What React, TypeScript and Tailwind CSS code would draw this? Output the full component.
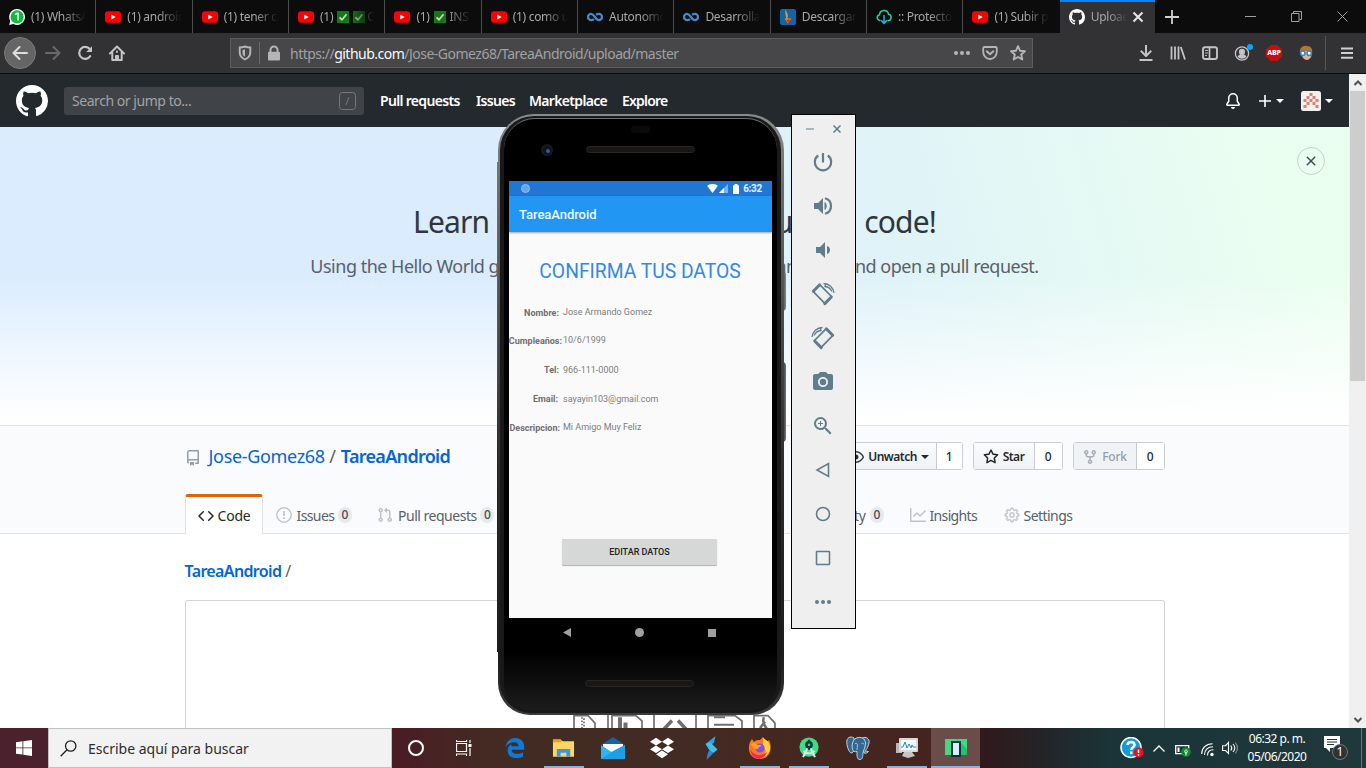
import React from "react";
import { GoGear, GoEye, GoPlay, GoProject, GoBook, GoShield } from "react-icons/go";
import { MdCameraAlt, MdZoomIn } from "react-icons/md";
import { SiDropbox } from "react-icons/si";

const UI = "font-['Noto_Sans','Open_Sans',sans-serif]";

function Octicon({ d, className = "" }: { d: string; className?: string }) {
  return <svg viewBox="0 0 16 16" className={`h-4 w-4 shrink-0 ${className}`} fill="currentColor" fillRule="evenodd"><path d={d} /></svg>;
}

const repoPath = "M2 2.5A2.5 2.5 0 014.5 0h8.75a.75.75 0 01.75.75v12.5a.75.75 0 01-.75.75h-2.5a.75.75 0 110-1.500h1.750v-2h-8a1 1 0 00-.714 1.700.75.75 0 01-1.072 1.050A2.495 2.495 0 012 11.500v-9zm10.500-1V9h-8c-.356 0-.694.074-1 .208V2.500a1 1 0 011-1h8zM5 12.250v3.250a.25.25 0 00.4.2l1.450-1.087a.25.25 0 01.3 0L8.600 15.700a.25.25 0 00.4-.2v-3.250a.25.25 0 00-.25-.25h-3.500a.25.25 0 00-.25.25z";
const codePath = "M4.72 3.22a.75.75 0 011.060 1.060L2.060 8l3.720 3.720a.75.75 0 11-1.060 1.060L.47 8.530a.75.75 0 010-1.060l4.250-4.250zm6.560 0a.75.75 0 10-1.060 1.060L13.940 8l-3.720 3.720a.75.75 0 101.060 1.060l4.250-4.250a.75.75 0 000-1.060l-4.250-4.250z";
const pullPath = "M7.177 3.073L9.573.677A.25.25 0 0110 .854v4.792a.25.25 0 01-.427.177L7.177 3.427a.25.25 0 010-.354zM3.750 2.500a.75.75 0 100 1.500.75.75 0 000-1.500zm-2.250.75a2.250 2.250 0 113 2.122v5.256a2.251 2.251 0 11-1.500 0V5.372A2.250 2.250 0 011.500 3.250zM11 2.500h-1V4h1a1 1 0 011 1v5.628a2.251 2.251 0 101.500 0V5A2.500 2.500 0 0011 2.500zm1 10.250a.75.75 0 111.500 0 .75.75 0 01-1.500 0zM3.750 12a.75.75 0 100 1.500.75.75 0 000-1.500z";
const forkPath = "M5 3.250a.75.75 0 11-1.500 0 .75.75 0 011.500 0zm0 2.122a2.250 2.250 0 10-1.500 0v.878A2.250 2.250 0 005.750 8.500h1.500v2.128a2.251 2.251 0 101.500 0V8.500h1.500a2.250 2.250 0 002.250-2.250v-.878a2.250 2.250 0 10-1.500 0v.878a.75.75 0 01-.75.75h-4.500A.75.75 0 015 6.250v-.878zm3.750 7.378a.75.75 0 11-1.500 0 .75.75 0 011.500 0zm3-8.750a.75.75 0 100-1.500.75.75 0 000 1.500z";
const starPath = "M8 .25a.75.75 0 01.673.418l1.882 3.815 4.210.612a.75.75 0 01.416 1.279l-3.046 2.970.719 4.192a.75.75 0 01-1.088.791L8 12.347l-3.766 1.980a.75.75 0 01-1.088-.79l.72-4.194L.818 6.374a.75.75 0 01.416-1.280l4.210-.611L7.327.668A.75.75 0 018 .25zm0 2.445L6.615 5.500a.75.75 0 01-.564.41l-3.097.45 2.240 2.184a.75.75 0 01.216.664l-.528 3.084 2.769-1.456a.75.75 0 01.698 0l2.770 1.456-.53-3.084a.75.75 0 01.216-.664l2.240-2.183-3.096-.45a.75.75 0 01-.564-.41L8 2.694z";
const graphPath = "M1.500 1.750a.75.75 0 00-1.500 0v12.500c0 .414.336.75.75.75h14.500a.75.75 0 000-1.500H1.500V1.750zm14.280 2.530a.75.75 0 00-1.060-1.060L10 7.940 7.530 5.470a.75.75 0 00-1.060 0L3.220 8.720a.75.75 0 001.060 1.060L7 7.060l2.470 2.470a.75.75 0 001.060 0l5.250-5.250z";
const bellPath = "M8 16a2 2 0 001.985-1.750c.017-.137-.097-.25-.235-.25h-3.500c-.138 0-.252.113-.235.25A2 2 0 008 16zM8 1.500A3.500 3.500 0 004.500 5v2.947c0 .346-.102.683-.294.97L2.500 11.500h11l-1.706-2.583a1.750 1.750 0 01-.294-.97V5A3.500 3.500 0 008 1.500zM3 5a5 5 0 0110 0v2.947c0 .05.015.098.042.139l1.703 2.555A1.518 1.518 0 0113.482 13H2.518a1.518 1.518 0 01-1.263-2.360l1.703-2.554A.25.25 0 003 7.947V5z";

function Octocat({ className }: { className?: string }) {
  return (
    <svg viewBox="0 0 16 16" className={className} fill="currentColor">
      <path d="M8 0C3.58 0 0 3.58 0 8c0 3.54 2.29 6.53 5.47 7.59.4.07.55-.17.55-.38 0-.19-.01-.82-.01-1.49-2.01.37-2.53-.49-2.69-.94-.09-.23-.48-.98-.82-1.17-.28-.15-.68-.52-.01-.53.63-.01 1.08.58 1.23.82.72 1.21 1.87.87 2.33.66.07-.52.28-.87.51-1.07-1.78-.2-3.64-.89-3.64-3.95 0-.87.31-1.59.82-2.15-.08-.2-.36-1.02.08-2.12 0 0 .67-.21 2.2.82.64-.18 1.32-.27 2-.27s1.36.09 2 .27c1.53-1.04 2.2-.82 2.2-.82.44 1.1.16 1.92.08 2.12.51.56.82 1.27.82 2.15 0 3.07-1.87 3.75-3.65 3.95.29.25.54.73.54 1.48 0 1.07-.01 1.93-.01 2.2 0 .21.15.46.55.38A8.01 8.01 0 0 0 16 8c0-4.42-3.58-8-8-8z" />
    </svg>
  );
}

function YouTube() {
  return (
    <svg viewBox="0 0 16 16" className="h-4 w-4 shrink-0">
      <rect x="0" y="2.3" width="16" height="11.4" rx="3" fill="#ff0000" />
      <path d="M6.3 5.6 10.6 8l-4.3 2.4z" fill="#fff" />
    </svg>
  );
}

function WhatsApp() {
  return (
    <svg viewBox="0 0 16 16" className="h-4 w-4 shrink-0">
      <path d="M8 0a8 8 0 1 1-3.7 15.1L.2 16l1-4A8 8 0 0 1 8 0z" fill="#fff" />
      <circle cx="8.1" cy="7.9" r="6.6" fill="#12b83f" />
      <path d="M6 5.7 8 4.2h1v7.2" fill="none" stroke="#fff" strokeWidth="1.6" />
    </svg>
  );
}

function Loop() {
  return (
    <svg viewBox="0 0 16 16" className="h-4 w-4 shrink-0" fill="none" stroke="#4a86c6" strokeWidth="2.3">
      <path d="M7 10.200C6 11 5.200 11.200 4.200 11.200a3.200 3.200 0 0 1 0-6.400C7.500 4.800 8.300 11.200 11.800 11.200a3.200 3.200 0 0 0 0-6.400c-1 0-1.800.2-2.800 1" />
    </svg>
  );
}

function Flame() {
  return (
    <svg viewBox="0 0 16 16" className="h-4 w-4 shrink-0">
      <rect width="16" height="16" rx="2" fill="#0c67a8" />
      <path d="M6 0c-.5 2.500 2 4 2 6.500L7.500 9.500h4L8 14.500 4.500 9.500H6C6.500 7 4 3 6 0z" fill="#f48a20" />
      <path d="M6 10.500h5.500L8.500 14.500z" fill="#d5380f" />
    </svg>
  );
}

function CloudDown() {
  return (
    <svg viewBox="0 0 16 16" className="h-4 w-4 shrink-0" fill="none" strokeWidth="1.500">
      <path d="M4.500 11.500H3.500a3 3 0 0 1 0-5.800C4 .5 11.500 0 12.500 5.200c3.500.5 3.500 6.300 0 6.300h-1" stroke="#2ed19a" />
      <path d="M8 6v8M5 11.200 8 14.300l3-3.100" stroke="#21b4e6" />
    </svg>
  );
}

function Check() {
  return (
    <svg viewBox="0 0 12 12" className="h-3 w-3 shrink-0">
      <rect width="12" height="12" fill="#127a12" />
      <path d="M2.500 6.300 5 8.700l4.500-5.500" fill="none" stroke="#d0d0d0" strokeWidth="1.700" />
    </svg>
  );
}

type TabData = { icon: React.ReactNode; text: React.ReactNode };

const tabs: TabData[] = [
  { icon: <WhatsApp />, text: "(1) WhatsApp" },
  { icon: <YouTube />, text: "(1) android studio" },
  { icon: <YouTube />, text: "(1) tener cuidado" },
  { icon: <YouTube />, text: <><span>(1)</span><Check /><Check /><span className="ml-[-2px]">COMO</span></> },
  { icon: <YouTube />, text: <><span>(1)</span><Check /><span>INSTALAR</span></> },
  { icon: <YouTube />, text: "(1) como usar" },
  { icon: <Loop />, text: "Autonomo - 1" },
  { icon: <Loop />, text: "Desarrollar app" },
  { icon: <Flame />, text: "Descargar todo" },
  { icon: <CloudDown />, text: ":: Protectora ::" },
  { icon: <YouTube />, text: "(1) Subir proyecto" },
];

function TabBar() {
  return (
    <div className="flex h-[33px] shrink-0 bg-[#0c0c0d] text-[12px] tracking-[-0.3px] text-[#a8a8a9]">
      {tabs.map((t, i) => (
        <div key={i} className={`flex w-[96.35px] shrink-0 items-center gap-[6px] pt-px pl-[9px] ${i < 10 ? "border-r border-[#4d4d4e]" : ""}`}>
          {t.icon}
          <div className="flex h-5 w-[56px] items-center gap-[4px] overflow-hidden whitespace-nowrap [mask-image:linear-gradient(to_right,#000_55%,transparent_98%)]">
            {t.text}
          </div>
        </div>
      ))}
      <div className="flex w-[95px] shrink-0 items-center gap-[6px] border-t-2 border-[#0a84ff] bg-[#323234] pb-px pl-[9px]">
        <Octocat className="h-4 w-4 shrink-0 text-white" />
        <div className="w-[37px] overflow-hidden whitespace-nowrap [mask-image:linear-gradient(to_right,#000_45%,transparent_100%)]">Upload files</div>
        <svg viewBox="0 0 12 12" className="ml-[-2px] h-3 w-3" stroke="#e6e6e6" strokeWidth="2"><path d="M1.500 1.500l9 9M10.500 1.500l-9 9" /></svg>
      </div>
      <div className="flex w-[35px] items-center justify-center">
        <svg viewBox="0 0 14 14" className="h-[14px] w-[14px]" stroke="#d0d0d0" strokeWidth="1.800"><path d="M7 0v14M0 7h14" /></svg>
      </div>
      <div className="ml-auto flex items-center gap-[35px] pr-[18px]">
        <svg viewBox="0 0 11 11" className="h-[11px] w-[11px]" stroke="#a0a0a0"><path d="M0 5.500h11" /></svg>
        <svg viewBox="0 0 11 11" className="h-[11px] w-[11px]" fill="none" stroke="#a0a0a0"><path d="M.5 2.500h7.500v8H.5zM2.500 2.500v-2h8v8h-2" /></svg>
        <svg viewBox="0 0 11 11" className="h-[11px] w-[11px]" stroke="#a0a0a0"><path d="M.5.5l10 10M10.500.5l-10 10" /></svg>
      </div>
    </div>
  );
}

function Toolbar() {
  const s = { fill: "none", stroke: "#c4c4c5", strokeWidth: 2, strokeLinecap: "round" as const, strokeLinejoin: "round" as const };
  return (
    <div className="flex h-[41px] shrink-0 items-center border-b border-[#0c0c0d] bg-[#323234]">
      <div className="ml-1 flex h-8 w-8 items-center justify-center rounded-full border border-[#7a7a7b] bg-[#656566]">
        <svg viewBox="0 0 16 16" className="h-4 w-4" {...s} stroke="#dedede"><path d="M15 8H1.500M7.500 2l-6 6 6 6" /></svg>
      </div>
      <svg viewBox="0 0 16 16" className="ml-[9px] h-4 w-4" {...s} stroke="#69696a"><path d="M1 8h13.500M8.500 2l6 6-6 6" /></svg>
      <svg viewBox="0 0 16 16" className="ml-4 h-4 w-4" {...s}><path d="M13.200 11.200A6 6 0 1 1 12.800 4" strokeWidth="2.200" /><path d="M15 1.200V7H9.200z" fill="#c4c4c5" stroke="none" /></svg>
      <svg viewBox="0 0 16 16" className="ml-4 h-4 w-4" {...s}><path d="M1 8.500 8 1.500l7 7M3.300 7.500V15h9.400V7.500" /><path d="M7 15v-4h2v4M8 6.500v.5" /></svg>
      <div className="ml-[105px] flex h-[30px] w-[803px] items-center border border-[#5c5c5e] bg-[#474749]">
        <svg viewBox="0 0 16 16" className="ml-[6px] h-4 w-4" fill="none" stroke="#b5b5b6" strokeWidth="1.900"><path d="M8 1.500c2 .8 3.500 1 5.300 1V7.500c0 3.500-2 5.500-5.300 7-3.300-1.500-5.300-3.500-5.300-7v-5C4.500 2.500 6 2.300 8 1.500z" /><path d="M8 4.200v7.500c-1.800-1-2.500-2.300-2.500-4V5c1 0 1.700-.3 2.500-.8z" fill="#b5b5b6" stroke="none" /></svg>
        <div className="ml-[6px] h-[22px] w-px bg-[#69696a]" />
        <svg viewBox="0 0 16 16" className="ml-[6px] h-4 w-4"><path d="M4.500 7V5a3.500 3.500 0 0 1 7 0v2" fill="none" stroke="#b5b5b6" strokeWidth="2" /><rect x="2" y="6.800" width="12" height="8.700" rx="1" fill="#b5b5b6" /></svg>
        <div className="ml-[8px] text-[14px] tracking-[-0.51px] whitespace-nowrap text-[#a0a0a1]">https://<span className="text-[#f9f9fa]">github.com</span>/Jose-Gomez68/TareaAndroid/upload/master</div>
        <div className="ml-auto flex items-center gap-3 pr-[6px]">
          <svg viewBox="0 0 16 16" className="h-4 w-4" fill="#b5b5b6"><circle cx="2" cy="8" r="2" /><circle cx="8" cy="8" r="2" /><circle cx="14" cy="8" r="2" /></svg>
          <svg viewBox="0 0 16 16" className="h-4 w-4" {...s} stroke="#b5b5b6"><path d="M2.500 2h11c.8 0 1.300.5 1.300 1.200v3.500c0 4-3 7.300-6.800 7.300S1.200 10.700 1.200 6.700V3.200C1.200 2.500 1.700 2 2.500 2z" strokeWidth="1.800" /><path d="M4.700 6.300 8 9.300l3.300-3" /></svg>
          <svg viewBox="0 0 16 16" className="h-4 w-4" {...s} stroke="#b5b5b6"><path d="M8 1.200l2 4.500 4.900.5-3.700 3.300 1.100 5L8 12l-4.300 2.500 1.100-5L1.100 6.200 6 5.700z" strokeWidth="1.900" /></svg>
        </div>
      </div>
      <div className="ml-auto flex items-center">
        <svg viewBox="0 0 16 16" className="h-4 w-4" {...s} strokeLinecap="square"><path d="M8 1v9M3.500 6.500 8 11l4.500-4.500M2.500 15h11" /></svg>
        <svg viewBox="0 0 16 16" className="ml-4 h-4 w-4" {...s} strokeLinecap="butt"><path d="M1.500 1.500v13M5 1.500v13M8.500 1.500v13M10.800 2l4.200 12.500" strokeWidth="1.800" /></svg>
        <svg viewBox="0 0 16 16" className="ml-4 h-4 w-4" {...s}><rect x="1" y="2.200" width="14" height="11.800" rx="2" strokeWidth="1.900" /><path d="M7.500 2.500v11" strokeWidth="1.700" /><path d="M3.500 5.500h2M3.500 8h2M3.500 10.500h1" strokeWidth="1" /></svg>
        <svg viewBox="0 0 20 20" className="ml-4 h-5 w-5"><circle cx="8" cy="10.500" r="6.600" fill="none" stroke="#c4c4c5" strokeWidth="1.300" /><circle cx="8" cy="8.900" r="3.100" fill="#c4c4c5" /><path d="M3.500 13.500c2-3 7-3 9 0-2.500 3-6.500 3-9 0z" fill="#c4c4c5" /><circle cx="16" cy="4" r="3" fill="#00a8ff" /></svg>
        <div className="ml-[12px] flex h-4 w-4 items-center justify-center bg-[#c70d0d] text-[7px] font-extrabold tracking-[-0.2px] text-white [clip-path:polygon(30%_0,70%_0,100%_30%,100%_70%,70%_100%,30%_100%,0_70%,0_30%)]">ABP</div>
        <svg viewBox="0 0 16 16" className="ml-4 h-4 w-4"><path d="M2 8C1 3 5 0 9 1c4 0 6 3 5 8l-1 4-8-1z" fill="#b8742c" /><path d="M4 6h9v5c-1 3-3 4-4 4s-4-1-5-4z" fill="#e8b088" /><circle cx="4.800" cy="8.300" r="2.200" fill="#fff" stroke="#1e88e5" strokeWidth="1.500" /><circle cx="11.200" cy="8.300" r="2.200" fill="#fff" stroke="#1e88e5" strokeWidth="1.500" /></svg>
        <div className="ml-[11px] h-[34px] w-px bg-[#58585a]" />
        <svg viewBox="0 0 14 14" className="mr-[12px] ml-[14px] h-[14px] w-[14px]" stroke="#d0d0d1" strokeWidth="2"><path d="M1 2.500h12M1 7h12M1 11.700h12" /></svg>
      </div>
    </div>
  );
}

function Caret() {
  return <span className="inline-block h-0 w-0 border-x-4 border-t-4 border-x-transparent border-t-current" />;
}

function GitHubHeader() {
  return (
    <div className="flex h-[53px] shrink-0 items-center bg-[#24292e] pl-4 text-white">
      <Octocat className="h-8 w-8" />
      <div className="ml-4 flex h-7 w-[300px] items-center justify-between rounded-[3px] bg-[#404448] pr-2 pl-2 text-[14px] tracking-[-0.45px] text-[#a0a3a5]">
        Search or jump to...
        <svg viewBox="0 0 17 18" className="h-[18px] w-[17px]" fill="none" stroke="#74787b"><rect x=".5" y=".5" width="16" height="17" rx="3" /><path d="M10 5l-3 8" /></svg>
      </div>
      <div className="ml-4 flex gap-4 text-[14px] font-semibold tracking-[-0.68px] whitespace-nowrap">
        <span className="w-20">Pull requests</span>
        <span className="w-[37px]">Issues</span>
        <span className="w-[77px]">Marketplace</span>
        <span className="tracking-[-0.8px]">Explore</span>
      </div>
      <div className="ml-auto flex items-center pr-4">
        <Octicon d={bellPath} />
        <svg viewBox="0 0 12 12" className="ml-[18px] h-3 w-3" stroke="#fff" strokeWidth="1.600"><path d="M6 0v12M0 6h12" /></svg>
        <span className="ml-[5px] flex"><Caret /></span>
        <svg viewBox="0 0 20 20" className="ml-[17px] h-5 w-5">
          <rect width="20" height="20" rx="2.500" fill="#f0f0f0" />
          <path fill="#dc8070" d="M8.500 2h3v3h-3zM5.500 5h3v3h-3zM11.500 5h3v3h-3zM2.500 8h3v3h-3zM8.500 8h3v3h-3zM14.500 8h3v3h-3zM5.500 11h3v3h-3zM11.500 11h3v3h-3zM2.500 14h3v3h-3zM14.500 14h3v3h-3z" />
        </svg>
        <span className="ml-1 flex"><Caret /></span>
      </div>
    </div>
  );
}

function Hero() {
  return (
    <div className="relative h-[299px] shrink-0 border-b border-[#e1e4e8] bg-[linear-gradient(180deg,rgba(255,255,255,0)_50%,#fff_98%),linear-gradient(75deg,#dbecff_40%,#dff3f8_66%,#e4f8f5_78%,#ebfff0_96%)] text-center whitespace-nowrap">
      <div className="flex h-full flex-col items-center pt-[71px]">
        <h1 className="text-[30px] leading-[48px] tracking-[-0.87px] text-[#30363c]">Learn Git and GitHub without <span className="mr-[10px] ml-[-10px]">any</span> code!</h1>
        <p className="mt-[4px] text-[18px] leading-8 tracking-[-0.5px] text-[#5a6068]">Using the Hello World guide, you’ll start a branch, write comments, and open a pull request.</p>
      </div>
      <div className="absolute top-5 right-6 flex h-7 w-7 items-center justify-center rounded-full border border-[#c3d3ca]">
        <svg viewBox="0 0 10 10" className="h-[10px] w-[10px]" stroke="#444d56" strokeWidth="1.500"><path d="M.8.8l8.400 8.400M9.200.8.8 9.200" /></svg>
      </div>
    </div>
  );
}

function Counter({ n }: { n: string }) {
  return <span className="flex h-4 items-center rounded-full bg-[#e7e9eb] px-[4px] text-[12px] leading-4 font-medium text-[#444d56]">{n}</span>;
}

function Split({ children, n, disabled, className }: { children: React.ReactNode; n: string; disabled?: boolean; className: string }) {
  return (
    <div className={`flex h-7 rounded-[3px] border border-[#c9ccd0] text-[12px] font-semibold tracking-[-0.5px] whitespace-nowrap text-[#24292e] ${className}`}>
      <div className={`flex flex-1 items-center justify-center gap-1 border-r border-[#c9ccd0] pt-px ${disabled ? "bg-[#eff3f6] text-[#959da5]" : "bg-gradient-to-b from-[#fafbfc] to-[#eff3f6]"}`}>{children}</div>
      <div className={`flex items-center justify-center bg-white pt-px font-medium ${n === "1" ? "w-[25px]" : "w-[27px]"}`}>{n}</div>
    </div>
  );
}

function RepoHead() {
  return (
    <div className="h-[108px] shrink-0 border-b border-[#e1e4e8] bg-[#fafbfc]">
      <div className="mx-auto flex h-full w-[980px] flex-col">
        <div className="mt-4 flex h-7 items-center">
          <Octicon d={repoPath} className="mt-[3px] text-[#959da5]" />
          <div className="ml-2 text-[18px] tracking-[-0.33px] whitespace-nowrap text-[#586069]">
            <span className="text-[#0366d6]">Jose-Gomez68</span> <span className="mr-px">/</span> <span className="font-semibold tracking-[-0.7px] text-[#0366d6]">TareaAndroid</span>
          </div>
          <div className="ml-auto flex gap-[10px]">
            <Split n="1" className="w-[122px]"><GoEye className="h-4 w-4 stroke-current stroke-[.6]" />Unwatch<Caret /></Split>
            <Split n="0" className="w-[90px]"><Octicon d={starPath} />Star</Split>
            <Split n="0" disabled className="w-[92px]"><Octicon d={forkPath} className="text-[#a9afb5]" /><span className="font-medium tracking-[-0.2px]">Fork</span></Split>
          </div>
        </div>
        <div className="mt-auto mb-[-1px] flex h-10 items-stretch text-[14px] tracking-[-0.4px] whitespace-nowrap text-[#586069]">
          <div className="flex w-[78px] items-center gap-1 rounded-t-[3px] border-x border-t-[3px] border-x-[#e1e4e8] border-t-[#e36209] bg-white pl-3 tracking-[-0.2px] text-[#24292e]"><Octicon d={codePath} />Code</div>
          <div className="ml-[13px] flex items-center gap-1 pt-[2px]">
            <svg viewBox="0 0 16 16" className="h-4 w-4" fill="none" stroke="#c3c7cb" strokeWidth="1.500"><circle cx="8" cy="8" r="7.200" /><path d="M8 4v5M8 10.300v1.700" strokeWidth="1.800" /></svg>
            <span className="w-[38px] pl-px tracking-[-0.6px]">Issues</span><Counter n="0" />
          </div>
          <div className="ml-[25px] flex items-center gap-1 pt-[2px]"><Octicon d={pullPath} className="text-[#bfc3c7]" /><span className="w-[79px] pl-px tracking-[-0.48px]">Pull requests</span><Counter n="0" /></div>
          <div className="ml-6 flex items-center gap-1 pt-[2px]"><GoPlay className="h-4 w-4 text-[#bfc3c7]" />Actions</div>
          <div className="ml-6 flex items-center gap-1 pt-[2px]"><GoProject className="h-4 w-4 text-[#bfc3c7]" />Projects</div>
          <div className="ml-6 flex items-center gap-1 pt-[2px]"><GoBook className="h-4 w-4 text-[#bfc3c7]" />Wiki</div>
          <div className="ml-auto flex w-[93px] items-center gap-1 pt-[2px]"><GoShield className="h-4 w-4 shrink-0 text-[#bfc3c7]" /><span className="flex w-[55px] shrink-0 justify-end">Security</span><Counter n="0" /></div>
          <div className="ml-[26px] flex w-[69px] items-center gap-1 pt-[2px] tracking-[-0.65px]"><Octicon d={graphPath} className="text-[#bfc3c7]" />Insights</div>
          <div className="mr-[92px] ml-[25px] flex w-[69px] items-center gap-1 pt-[2px] tracking-[-0.55px]"><GoGear className="h-4 w-4 shrink-0 stroke-current stroke-[.6] text-[#bfc3c7]" />Settings</div>
        </div>
      </div>
    </div>
  );
}

function FileGlyphs() {
  return (
    <svg viewBox="0 0 204 13" preserveAspectRatio="none" className="absolute top-[640px] left-[573px] h-[14px] w-[204px]" fill="none" stroke="#6f6f6f" strokeWidth="1.700">
      <path d="M1 14V1.500h14l7 7v6M35 14V1M39 14V1.500h24l6 5v8M81 14V1M123 14V1M135 14V1.500h27l7 5v8M181 14V1.500h14l7 7v6" />
      <path d="M9 3v12M11 4v12" strokeDasharray="1.500 1.500" />
      <path d="M47 3v11M52.500 8v6" strokeWidth="4" />
      <path d="M99 6l-8 8M105 6l8 8" strokeWidth="3.500" />
      <path d="M141 3h11M141 10h20" /><path d="M191 3c-1.500 3-.5 7 3 11M192 7l-5 6" strokeWidth="2.500" />
    </svg>
  );
}

const fields = [
  { l: "Nombre:", v: "Jose Armando Gomez", lw: "w-[50px]", dy: "pb-[1px]" },
  { l: "Cumpleaños:", v: "10/6/1999", lw: "w-[53px]", dy: "pb-[2px]" },
  { l: "Tel:", v: "966-111-0000", lw: "w-[50px]", dy: "" },
  { l: "Email:", v: "sayayin103@gmail.com", lw: "w-[49px]", dy: "" },
  { l: "Descripcion:", v: "Mi Amigo Muy Feliz", lw: "w-[51px]", dy: "pb-[1px]" },
];

function Phone() {
  return (
    <div className="absolute top-[40px] left-[498px] h-[601px] w-[289px] font-[Roboto,sans-serif]">
      <div className="absolute top-[157px] left-[284px] h-10 w-[4px] rounded-r-sm bg-gradient-to-r from-[#333] to-[#8a8a8a]" />
      <div className="absolute top-[248px] left-[284px] h-20 w-[4px] rounded-r-sm bg-gradient-to-r from-[#222] to-[#777]" />
      <div className="absolute top-12 left-[-1px] h-[490px] w-[3px] bg-[linear-gradient(180deg,#777_0,#555_40%,#222_60%,#1c1c1c_100%)]" />
      <div className="relative flex h-[601px] w-[286px] rounded-t-[36px] rounded-b-[32px] bg-[linear-gradient(180deg,#8a8c8b_0%,#6c6c6c_12%,#4a4a4a_35%,#2c2c2c_60%,#1c1c1c_90%,#3b3b3b_100%)] p-[2px_3px_2px_2px]">
        <div className="flex flex-1 rounded-t-[34px] rounded-b-[31px] bg-[#191919] p-[2px_4px_3px_4px]">
          <div className="flex flex-1 flex-col items-center rounded-t-[31px] rounded-b-[27px] border-t border-[#69706f] bg-[linear-gradient(180deg,#000_90%,#1c1c1c)]">
            <div className="relative h-[62px] w-[263px] shrink-0">
              <div className="absolute top-[7px] left-[122px] h-[7px] w-[19px] rounded bg-[#0a0a0d]" />
              <div className="absolute top-[25px] left-[32px] flex h-3 w-3 items-center justify-center rounded-full border-2 border-[#191a20] bg-[#10131f]"><div className="mt-px ml-px h-1 w-1 rounded-full bg-[#3c52a5]" /></div>
              <div className="absolute top-[27px] left-[77px] h-[7px] w-[109px] rounded-full border border-[#262626] bg-[#191613]" />
            </div>
            <div className="flex h-[437px] w-[263px] shrink-0 flex-col bg-[#fafafa]">
              <div className="flex h-[15px] shrink-0 items-center bg-[#1f76d3] pr-[10px] pl-3 text-[10px] font-bold text-[#e8f1fb]">
                <div className="h-[9px] w-[9px] rounded-full border border-[#8dbcf0] bg-[#6aa6e6]" />
                <svg viewBox="0 0 12 10" className="ml-auto h-[9px] w-[11px]"><path d="M0 2c3.500-2.700 8.500-2.700 12 0L6 10z" fill="#fff" /></svg>
                <svg viewBox="0 0 10 10" className="ml-[1px] h-[9px] w-[9px]"><path d="M10 0v10H0z" fill="#7fb1e8" /><path d="M5.500 4.500V10H0z" fill="#fff" /></svg>
                <svg viewBox="0 0 6 10" className="mr-[4px] ml-[5px] h-[10px] w-[6px]"><path d="M0 1.200h1.500V0h3v1.200H6V10H0z" fill="#fff" /></svg>
                <span className="tracking-[-0.3px]">6:32</span>
              </div>
              <div className="flex h-[36px] shrink-0 items-center bg-[#2196f3] pt-px pl-[10px] text-[13px] font-medium tracking-[-0.05px] text-[#eef6fe] shadow-[0_1px_2px_rgba(0,0,0,0.35)]">TareaAndroid</div>
              <div className="mt-[28px] flex h-6 items-center justify-center text-[19.300px] whitespace-nowrap text-[#3389e2]"><span className="mr-[1px]">CONFIRMA TUS DATOS</span></div>
              <div className="mt-[15px] flex flex-col text-[9px] text-[#7d7d7d]">
                {fields.map((f) => (
                  <div key={f.l} className="flex h-[28.800px] items-center whitespace-nowrap">
                    <div className="flex w-[54px] shrink-0"><span className={`${f.lw} flex justify-end text-[9px] font-bold text-[#6f6f6f]`}>{f.l}</span></div>
                    <span className={`flex items-center ${f.dy}`}>{f.v}</span>
                  </div>
                ))}
              </div>
              <div className="mt-[96px] ml-[53px] flex h-[26px] w-[155px] items-center justify-center rounded-[1px] bg-[#d6d7d7] pt-px text-[9px] font-medium text-[#222] shadow-[0_1px_1px_rgba(0,0,0,0.3)]">EDITAR DATOS</div>
            </div>
            <div className="flex w-[263px] items-center pt-[10px]">
              <svg viewBox="0 0 8 9" className="ml-[54px] h-[9px] w-2" fill="#a0a0a0"><path d="M8 0v9L0 4.500z" /></svg>
              <div className="ml-[64px] h-[9px] w-[9px] rounded-full bg-[#a0a0a0]" />
              <div className="ml-[64px] h-2 w-2 bg-[#a0a0a0]" />
            </div>
            <div className="mt-[43px] ml-[-3px] h-[7px] w-[109px] rounded-full border border-[#262626] bg-[#191613]" />
          </div>
        </div>
      </div>
    </div>
  );
}

function RotateGlyph({ flip }: { flip?: boolean }) {
  return (
    <svg viewBox="0 0 24 24" className={`h-6 w-6 ${flip ? "-scale-x-100" : ""}`} fill="none" stroke="#607d8b">
      <path d="M9 2.800 20.500 14.500 13.800 21.300 2.300 9.600z" strokeWidth="1.700" strokeLinejoin="round" />
      <path d="M2.300 9.300 8.700 2.800M13.800 21.600l6.500-6.600" strokeWidth="3" strokeLinecap="round" />
      <path d="M12.500 1.500C18 1.500 22.500 5.500 23 11M14.800 1.700 14 4.500c3.500.3 5.500 2 7 5" strokeWidth="1.300" />
    </svg>
  );
}

function EmulatorPanel() {
  const o = { fill: "none", stroke: "#607d8b", strokeWidth: 1.600 };
  const buttons: React.ReactNode[] = [
    <svg viewBox="0 0 20 20" className="h-5 w-5" fill="none" stroke="#607d8b" strokeWidth="2.200"><path d="M5.200 3.500a8.200 8.200 0 1 0 9.600 0M10 1v9.500" /></svg>,
    <svg viewBox="0 0 20 20" className="h-5 w-5" fill="currentColor"><path d="M1 7v6h4l5 5V2L5 7zM11.500 6c3 1 3 7 0 8z" /><path d="M12 2.200c8 2 8 13.600 0 15.600" fill="none" stroke="currentColor" strokeWidth="2.200" /></svg>,
    <svg viewBox="0 0 20 20" className="h-5 w-5" fill="currentColor"><path d="M3 7v6h4l5 5V2L7 7zM14 6c4 1 4 7 0 8z" /></svg>,
    <RotateGlyph />,
    <RotateGlyph flip />,
    <MdCameraAlt className="h-6 w-6" />,
    <MdZoomIn className="h-6 w-6" />,
    <svg viewBox="0 0 16 16" className="h-4 w-4" {...o}><path d="M13.500 1.500v13L2 8z" /></svg>,
    <svg viewBox="0 0 16 16" className="h-4 w-4" {...o}><circle cx="8" cy="8" r="6.500" /></svg>,
    <svg viewBox="0 0 16 16" className="h-4 w-4" {...o}><rect x="1.500" y="1.500" width="13" height="13" rx=".5" /></svg>,
    <svg viewBox="0 0 16 16" className="h-4 w-4" fill="#607d8b"><circle cx="2" cy="8" r="2" /><circle cx="8" cy="8" r="2" /><circle cx="14" cy="8" r="2" /></svg>,
  ];
  return (
    <div className="absolute top-[40px] left-[791px] flex h-[515px] w-[65px] flex-col items-center border border-black bg-[#efefef] text-[#607d8b]">
      <div className="flex h-[25px] w-full shrink-0 items-center justify-between pt-[3px] pr-[14px] pl-[14px]">
        <svg viewBox="0 0 8 8" className="h-2 w-2" stroke="#8fa3ad" strokeWidth="1.500"><path d="M0 4h8" /></svg>
        <svg viewBox="0 0 8 8" className="h-2 w-2" stroke="#607d8b" strokeWidth="1.500"><path d="M.5.5l7 7M7.500.5l-7 7" /></svg>
      </div>
      {buttons.map((b, i) => (
        <div key={i} className="flex h-11 w-full shrink-0 items-center justify-center pr-[1px]">{b}</div>
      ))}
    </div>
  );
}

function Scrollbar() {
  return (
    <div className="flex w-[17px] shrink-0 flex-col items-center bg-[#f0f0f0]">
      <svg viewBox="0 0 10 10" className="mt-1 h-[10px] w-[10px] shrink-0" fill="none" stroke="#505050" strokeWidth="2"><path d="M1.500 7 5 3.500 8.500 7" /></svg>
      <div className="mt-[3px] h-[290px] w-[15px] bg-[#cdcdcd]" />
      <svg viewBox="0 0 10 10" className="mt-auto mb-[3px] h-[10px] w-[10px] shrink-0" fill="none" stroke="#505050" strokeWidth="2"><path d="M1.500 3 5 6.500 8.500 3" /></svg>
    </div>
  );
}

const appIcons: { icon: React.ReactNode; open?: boolean; active?: boolean }[] = [
  { icon: <svg viewBox="0 0 24 24" className="h-[22px] w-[22px]"><path d="M1.500 11C2.800 4.500 7 1 12.500 1 18.500 1 22 5 22 10.800v3H8.400c.3 3.300 3 4.500 6.200 4.500 2.300 0 4.500-.6 6.200-1.700v4.700c-2 1.100-4.600 1.700-7.400 1.700-6.300 0-9.400-3.500-9.400-8.300 0-3 1.400-5.400 4-6.900C7.500 8.500 8.300 9.300 8.400 10.200h7.500c0-3-1.700-4.600-5-4.600C7.500 5.600 4 7.500 1.500 11z" fill="#0b7ad8" /></svg> },
  { icon: <svg viewBox="0 0 24 20" className="h-[20px] w-[23px]"><path d="M1 1h8l2 2h12v16H1z" fill="#ffd563" /><path d="M1 1h8l1 3H1z" fill="#e8a317" /><path d="M5 19v-8h14v8h-4v-4H9v4z" fill="#3f96de" /></svg>, open: true },
  { icon: <svg viewBox="0 0 24 22" className="h-[22px] w-[24px]"><path d="M0 8 12 0l12 8z" fill="#1263ac" /><path d="M2 7h20v8H2z" fill="#f7fbff" /><path d="M0 8l12 8 12-8v14H0z" fill="#2ab6f0" /><path d="M0 22 12 14l12-6v14z" fill="#1d9fe6" /></svg> },
  { icon: <SiDropbox className="h-6 w-6 text-white" /> },
  { icon: <svg viewBox="0 0 16 24" className="h-6 w-4"><path d="M12.500 0 11 6.500 7 10 2.500 8z" fill="#2f9df0" /><path d="M2.500 8 7 6l7.500 7.500-4 3.500-3.500-2z" fill="#37c3f5" /><path d="M6 14.500l4.500 2.500L3.500 24 4.500 18z" fill="#2487e6" /></svg> },
  { icon: <svg viewBox="0 0 24 24" className="h-6 w-6"><path d="M2 6l2-3 2 3c2-2 4-2 6-2l3-3c0 3 4 4 5 4l1-1c4 8 1 19-9 19S-1 14 2 6z" fill="#ff7a1a" /><path d="M15 1c1 3 8 4 7 12-1 6-6 9-11 9 6-2 9-7 4-12z" fill="#ffd336" /><path d="M2 12c2 8 12 9 17 4-2 9-16 10-17-4z" fill="#f5275d" /><circle cx="12" cy="12" r="4.600" fill="#8450e8" /><path d="M3 8c3-2 5-1 6 1l4 0c0 2-3 2-3 4H6z" fill="#ffa126" /></svg>, open: true },
  { icon: <svg viewBox="0 0 24 24" className="h-[22px] w-[22px]"><circle cx="12" cy="11" r="10.500" fill="#3ddc84" /><path d="M11 11 5.500 22M13 11l5.500 11M6 15c3 4 9 4 12 0" stroke="#e4edf1" strokeWidth="2.200" fill="none" /><circle cx="12" cy="8.500" r="2.800" fill="none" stroke="#0a3542" strokeWidth="2.800" /><path d="M12 3v3M12 11v3" stroke="#0a3542" strokeWidth="2.500" /></svg>, open: true },
  { icon: <svg viewBox="0 0 24 24" className="h-6 w-6" fill="#336791" stroke="#c9d3db" strokeWidth="1"><path d="M8 2C4-.5.500 2 .800 6.500 1 11 3 16 5 17c1.500.5 2.500-2 3.500-3.500z" /><path d="M16 2c4-2 8 1 7 5-1 4.500-3.500 8-4 8l3.500.5c-1 1.500-3 2-4.500 1.500z" /><path d="M12 1.500c5-.8 8 2.500 7.500 7C19 12 17.500 14 17 17c-.3 4-.5 6.500-3 6.500-3 0-3-3-3-8-2 .5-4 0-4.500-2C5.500 9 6.500 2.500 12 1.500z" /><path d="M15.500 7.500c1.500-.5 2.500 0 2.500 1M9 7.500c1.500-.5 2.500 0 2.500 1.500 0 2-.5 3-.5 5" fill="none" strokeWidth=".8" /></svg> },
  { icon: <svg viewBox="0 0 24 22" className="h-[22px] w-6"><path d="M1 6h6v10H1z" fill="#b8b8b8" /><rect x="4" y="1" width="19" height="14" rx="1" fill="#d9d9d9" /><rect x="6" y="3" width="15" height="10" fill="#f4f9fc" /><path d="M6 10h2l2-5 2 6 2-4 2 4 1-3 1 2h3" fill="none" stroke="#2e8ac0" /><path d="M9 15h8l3 4-7 2-6-2z" fill="#c5c5c5" /></svg>, open: true },
  { icon: <svg viewBox="0 0 24 20" className="h-5 w-6"><rect x="1" y="1" width="22" height="16" fill="#3ddc84" /><path d="M13 1l10 10v6h-8z" fill="#2bbd6e" /><rect x="8" y="4" width="8" height="14" fill="#d9eef8" stroke="#0c3040" strokeWidth="2" /></svg>, open: true, active: true },
];

function Taskbar() {
  return (
    <div className="flex h-10 shrink-0 bg-[linear-gradient(90deg,#4a222e_0,#4a1c24_392px,#432b22_490px,#422b22_700px,#45271f_800px,#45241f_930px,#30191b_985px,#22262a_1050px,#1b3437_1110px,#1e383b_1366px)] text-white">
      <div className="flex w-12 items-center justify-center">
        <svg viewBox="0 0 16 16" className="h-4 w-4" fill="#fff"><path d="M0 2.200 6.500 1.300v6.200H0zM7.300 1.200 16 0v7.500H7.300zM0 8.300h6.500v6.300L0 13.700zM7.300 8.300H16V16l-8.700-1.200z" /></svg>
      </div>
      <div className="flex w-[344px] items-center border border-[#c0c0c0] bg-[#f2f2f2] pl-[11px] text-[14px] text-[#2d2d2d]">
        <svg viewBox="0 0 17 17" className="h-[17px] w-[17px]" fill="none" stroke="#222" strokeWidth="1.300"><circle cx="10.700" cy="6" r="5.200" /><path d="M7 9.700.7 16.300" /></svg>
        <span className="ml-[11px]">Escribe aquí para buscar</span>
      </div>
      <div className="flex w-12 items-center justify-center"><div className="h-4 w-4 rounded-full border-2 border-white" /></div>
      <div className="flex w-[50px] items-center justify-center">
        <svg viewBox="0 0 16 16" className="mr-[2px] h-4 w-4" fill="none" stroke="#fff" strokeWidth="1.200"><path d="M.5 3.500h10v8H.5zM.5 0v1.500h10V0M.5 16v-2h10v2M14 0v3M14 8v8" /><path d="M14 4v3" strokeWidth="3" /></svg>
      </div>
      <div className="flex">
        {appIcons.map((a, i) => (
          <div key={i} className={`relative flex w-[49px] items-center justify-center ${a.active ? "bg-[#6a4c49]" : ""}`}>
            {a.icon}
            {a.open && <div className={`absolute bottom-0 h-[2px] bg-[#76b9ed] ${a.active ? "w-full" : "w-10"}`} />}
          </div>
        ))}
      </div>
      <div className="ml-auto flex items-center">
        <svg viewBox="0 0 24 22" className="h-[22px] w-6"><circle cx="11" cy="10.500" r="10" fill="#129bdc" stroke="#fff" strokeWidth="1.500" /><path d="M7.500 8c.3-4 7-4 7 0 0 2.300-3.300 2.300-3.300 5M11.200 14.500v2.500" stroke="#fff" strokeWidth="2.500" fill="none" /><circle cx="18.500" cy="15.500" r="5" fill="#e81123" /><path d="M18.500 12.500v3.500M18.500 17.200V18.700" stroke="#fff" strokeWidth="1.500" /></svg>
        <svg viewBox="0 0 12 7" className="ml-[9px] h-[7px] w-3" fill="none" stroke="#fff" strokeWidth="1.300"><path d="M.5 6.500 6 1l5.500 5.500" /></svg>
        <svg viewBox="0 0 16 14" className="mt-1 ml-[10px] h-[14px] w-4"><path d="M.7 2.700h13v8H.7z" fill="none" stroke="#fff" strokeWidth="1.300" /><path d="M2.500 4.500h2v4.500h-2z" fill="#fff" /><circle cx="11" cy="9" r="4.800" fill="#13892c" /><path d="M11 6.500c1.800 1.500 1.500 3.500 0 3.500s-1.800-2 0-3.500zM11 10v2.500" fill="none" stroke="#fff" /></svg>
        <svg viewBox="0 0 14 14" className="mt-1 ml-[10px] h-[14px] w-[14px]" fill="none" stroke="#fff" strokeWidth="1.100"><path d="M.7 11C.7 5 5 .8 11.500.8M3.500 12C3.500 7 7 3.700 12 3.700M6.500 12.500C6.500 9 9 6.800 12.500 6.800" /><circle cx="11" cy="11.500" r="1.700" fill="#fff" stroke="none" /></svg>
        <svg viewBox="0 0 16 14" className="ml-[7px] h-[14px] w-4" fill="none" stroke="#fff" strokeWidth="1.100"><path d="M.6 4.700h2.900L6.500 1.500v11L3.500 9.500H.6zM8.700 4.500c1.300 1.500 1.300 3.500 0 5M11 3c2.300 2.500 2.300 5.500 0 8" /><path d="M13.200 1.500c3 3.500 3 7.500 0 11" stroke="#80898a" /></svg>
        <div className="ml-[9px] flex w-[60px] flex-col items-center text-[12px] leading-[18px] tracking-[-0.5px] whitespace-nowrap">
          <span>06:32 p. m.</span><span>05/06/2020</span>
        </div>
        <div className="relative mr-[13px] ml-[17px] h-6 w-6">
          <svg viewBox="0 0 16 16" className="h-4 w-4"><path d="M0 0h16v12H6v4l-4-4H0z" fill="#fff" /><path d="M3 3.500h10M3 6h10M3 8.500h7" stroke="#1e383b" strokeWidth="1.200" /></svg>
          <div className="absolute top-2 left-2 flex h-4 w-4 items-center justify-center rounded-full border border-[#777] bg-[#303335] text-[12px] leading-none">1</div>
        </div>
        <div className="mr-[4px] h-10 w-px bg-[#69777a]" />
      </div>
    </div>
  );
}

export default function App() {
  return (
    <div className={`flex h-[768px] w-[1366px] flex-col overflow-hidden bg-white ${UI}`}>
      <TabBar />
      <Toolbar />
      <div className="relative flex min-h-0 flex-1">
        <div className="flex min-w-0 flex-1 flex-col overflow-hidden bg-white">
          <GitHubHeader />
          <Hero />
          <RepoHead />
          <div className="mx-auto flex min-h-0 w-[980px] flex-1 flex-col">
            <div className="mt-[25px] text-[16px] leading-6 tracking-[-0.2px] text-[#586069]"><span className="font-semibold tracking-[-0.65px] text-[#0366d6]">TareaAndroid</span> /</div>
            <div className="mt-[17px] flex-1 rounded-t-[3px] border border-b-0 border-[#d1d5da]" />
          </div>
        </div>
        <Scrollbar />
        <FileGlyphs />
        <Phone />
        <EmulatorPanel />
      </div>
      <Taskbar />
    </div>
  );
}
